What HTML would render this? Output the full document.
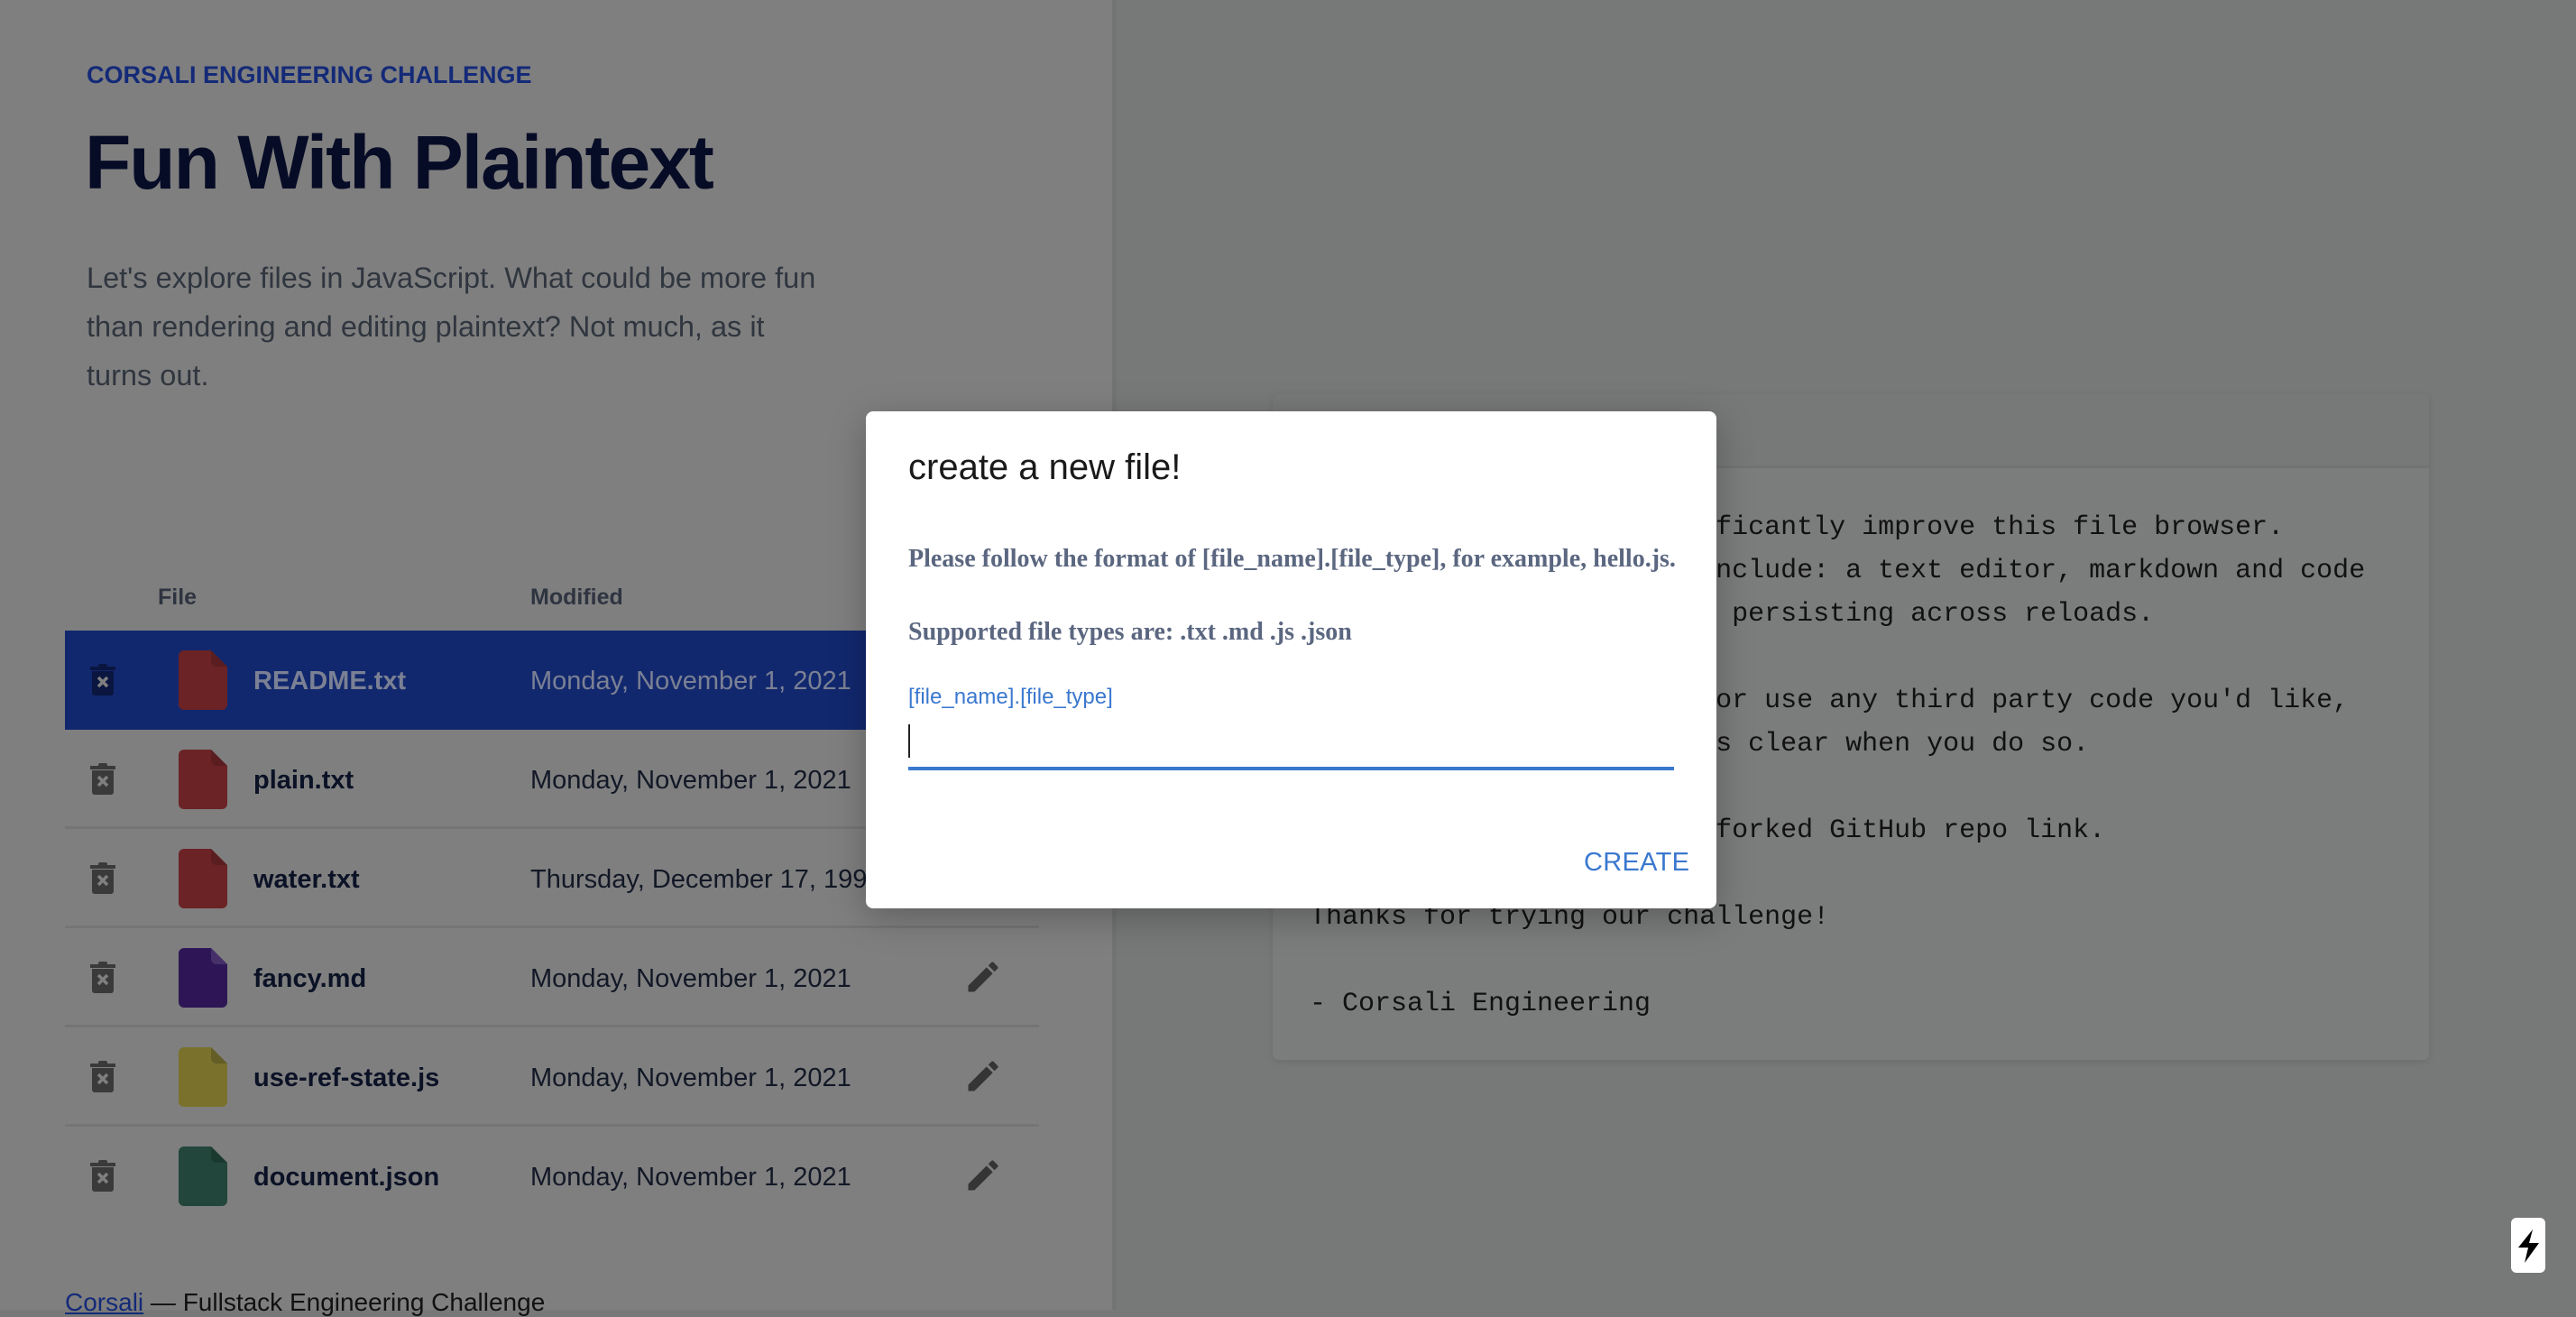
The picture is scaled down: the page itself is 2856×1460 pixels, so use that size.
<!DOCTYPE html>
<html><head><meta charset="utf-8"><style>
*{margin:0;padding:0;box-sizing:border-box}
body{width:2856px;height:1452px;overflow:hidden;position:relative;background:#777978;font-family:"Liberation Sans",sans-serif}
.a{position:absolute;white-space:nowrap}
#left{position:absolute;left:0;top:0;width:1233px;height:1452px;background:#7f7f7f}
#div{position:absolute;left:1233px;top:0;width:5px;height:1452px;background:#727373}
.row{position:absolute;left:72px;width:1080px;height:110px;border-bottom:3px solid #757575}
.fn{position:absolute;left:209px;top:40px;font-size:29px;font-weight:bold;color:#0b1226}
.dt{position:absolute;left:516px;top:40px;font-size:29px;color:#121826}
.tr{position:absolute;left:28px;top:36px}
.fi{position:absolute;left:126px;top:22px}
.pe{position:absolute;left:996px;top:32px}
.mono{font-family:"Liberation Mono",monospace;font-size:30px;color:#111}
</style></head><body>
<div id="left"></div><div id="div"></div>
<div class="a" style="left:96px;top:68px;font-size:27px;font-weight:bold;color:#142a78">CORSALI ENGINEERING CHALLENGE</div>
<div class="a" style="left:94px;top:132px;font-size:84px;font-weight:bold;color:#070c26;letter-spacing:-2px">Fun With Plaintext</div>
<div class="a" style="left:96px;top:281px;font-size:32.5px;line-height:54px;color:#30363f;white-space:normal;width:830px">Let's explore files in JavaScript. What could be more fun than rendering and editing plaintext? Not much, as it turns out.</div>
<div class="a" style="left:175px;top:648px;font-size:25px;font-weight:bold;color:#2e3440">File</div>
<div class="a" style="left:588px;top:648px;font-size:25px;font-weight:bold;color:#2e3440">Modified</div>

<svg width="0" height="0" style="position:absolute"><defs>
<symbol id="trash" viewBox="0 0 28 36"><rect x="0" y="4" width="28" height="4" fill="currentColor"/><rect x="9" y="1" width="10" height="4" rx="2" fill="currentColor"/><path d="M2 9h24v24a3 3 0 0 1-3 3H5a3 3 0 0 1-3-3z" fill="currentColor"/><path d="M9 16l10 10M19 16L9 26" stroke="#7f7f7f" stroke-width="3.5"/></symbol>
<symbol id="pen" viewBox="0 0 24 24"><path d="M3 17.25V21h3.75L17.81 9.94l-3.75-3.75L3 17.25zM20.71 7.04a1 1 0 0 0 0-1.41l-2.34-2.34a1 1 0 0 0-1.41 0l-1.83 1.83 3.75 3.75 1.830-1.83z" fill="#353535"/></symbol>
</defs></svg>

<div class="row" style="top:699px;background:#12286e;border:none">
<svg class="tr" width="28" height="36" style="color:#0a1640"><use href="#trash"/></svg>
<svg class="fi" width="54" height="66"><path d="M6 0h30l18 18v42a6 6 0 0 1-6 6H6a6 6 0 0 1-6-6V6a6 6 0 0 1 6-6z" fill="#6b2326"/><path d="M36 0v12a6 6 0 0 0 6 6h12z" fill="#5a1d20"/></svg>
<div class="fn" style="color:#7b8194">README.txt</div><div class="dt" style="color:#7b8194">Monday, November 1, 2021</div></div>

<div class="row" style="top:809px">
<svg class="tr" width="28" height="36" style="color:#3a3a3a"><use href="#trash"/></svg>
<svg class="fi" width="54" height="66"><path d="M6 0h30l18 18v42a6 6 0 0 1-6 6H6a6 6 0 0 1-6-6V6a6 6 0 0 1 6-6z" fill="#6b2326"/><path d="M36 0v12a6 6 0 0 0 6 6h12z" fill="#5a1d20"/></svg>
<div class="fn">plain.txt</div><div class="dt">Monday, November 1, 2021</div></div>

<div class="row" style="top:919px">
<svg class="tr" width="28" height="36" style="color:#3a3a3a"><use href="#trash"/></svg>
<svg class="fi" width="54" height="66"><path d="M6 0h30l18 18v42a6 6 0 0 1-6 6H6a6 6 0 0 1-6-6V6a6 6 0 0 1 6-6z" fill="#6b2326"/><path d="M36 0v12a6 6 0 0 0 6 6h12z" fill="#5a1d20"/></svg>
<div class="fn">water.txt</div><div class="dt">Thursday, December 17, 1998</div></div>

<div class="row" style="top:1029px">
<svg class="tr" width="28" height="36" style="color:#3a3a3a"><use href="#trash"/></svg>
<svg class="fi" width="54" height="66"><path d="M6 0h30l18 18v42a6 6 0 0 1-6 6H6a6 6 0 0 1-6-6V6a6 6 0 0 1 6-6z" fill="#2e1656"/><path d="M36 0v12a6 6 0 0 0 6 6h12z" fill="#45306a"/></svg>
<div class="fn">fancy.md</div><div class="dt">Monday, November 1, 2021</div>
<svg class="pe" width="44" height="44"><use href="#pen"/></svg></div>

<div class="row" style="top:1139px">
<svg class="tr" width="28" height="36" style="color:#3a3a3a"><use href="#trash"/></svg>
<svg class="fi" width="54" height="66"><path d="M6 0h30l18 18v42a6 6 0 0 1-6 6H6a6 6 0 0 1-6-6V6a6 6 0 0 1 6-6z" fill="#7a712c"/><path d="M36 0v12a6 6 0 0 0 6 6h12z" fill="#655d26"/></svg>
<div class="fn">use-ref-state.js</div><div class="dt">Monday, November 1, 2021</div>
<svg class="pe" width="44" height="44"><use href="#pen"/></svg></div>

<div class="row" style="top:1249px;border:none">
<svg class="tr" width="28" height="36" style="color:#3a3a3a"><use href="#trash"/></svg>
<svg class="fi" width="54" height="66"><path d="M6 0h30l18 18v42a6 6 0 0 1-6 6H6a6 6 0 0 1-6-6V6a6 6 0 0 1 6-6z" fill="#22463b"/><path d="M36 0v12a6 6 0 0 0 6 6h12z" fill="#1a3a30"/></svg>
<div class="fn">document.json</div><div class="dt">Monday, November 1, 2021</div>
<svg class="pe" width="44" height="44"><use href="#pen"/></svg></div>

<div class="a" style="left:72px;top:1428px;font-size:28px;color:#111"><span style="color:#142a78;text-decoration:underline">Corsali</span> — Fullstack Engineering Challenge</div>

<div class="a" style="left:1411px;top:437px;width:1282px;height:738px;background:#7b7c7c;border-radius:6px;box-shadow:0 2px 8px rgba(0,0,0,.1)">
<div style="height:82px;border-bottom:3px solid #727373;background:#777878;border-radius:6px 6px 0 0"></div>
<div class="mono" style="position:absolute;left:41px;top:124px;line-height:48px;white-space:pre">Your job is to help significantly improve this file browser.
Some possible ideas may include: a text editor, markdown and code
previews, and maybe state persisting across reloads.

Feel free to use modules or use any third party code you'd like,
Please make sure that it's clear when you do so.

Finally, reply with your forked GitHub repo link.

Thanks for trying our challenge!

- Corsali Engineering</div></div>

<div class="a" style="left:960px;top:456px;width:943px;height:551px;background:#fff;border-radius:8px;box-shadow:0 10px 40px rgba(0,0,0,.25)">
<div class="a" style="left:47px;top:40px;font-size:40px;color:#1a1a1a">create a new file!</div>
<div class="a" style="left:47px;top:148px;font-family:'Liberation Serif',serif;font-weight:bold;font-size:28px;color:#5b6780">Please follow the format of [file_name].[file_type], for example, hello.js.</div>
<div class="a" style="left:47px;top:229px;font-family:'Liberation Serif',serif;font-weight:bold;font-size:28px;color:#5b6780">Supported file types are: .txt .md .js .json</div>
<div class="a" style="left:47px;top:303px;font-size:24px;color:#3a78cf">[file_name].[file_type]</div>
<div class="a" style="left:47px;top:347px;width:2px;height:37px;background:#222"></div>
<div class="a" style="left:47px;top:394px;width:849px;height:4px;background:#3a78cf"></div>
<div class="a" style="left:796px;top:484px;font-size:29px;color:#3a78cf;letter-spacing:0.3px">CREATE</div>
</div>

<div class="a" style="left:2784px;top:1350px;width:38px;height:61px;background:#fff;border-radius:6px">
<svg width="38" height="61" viewBox="0 0 38 61"><path d="M24 13L8 33h11l-4 17 16-22H20z" fill="#000"/></svg></div>
</body></html>
